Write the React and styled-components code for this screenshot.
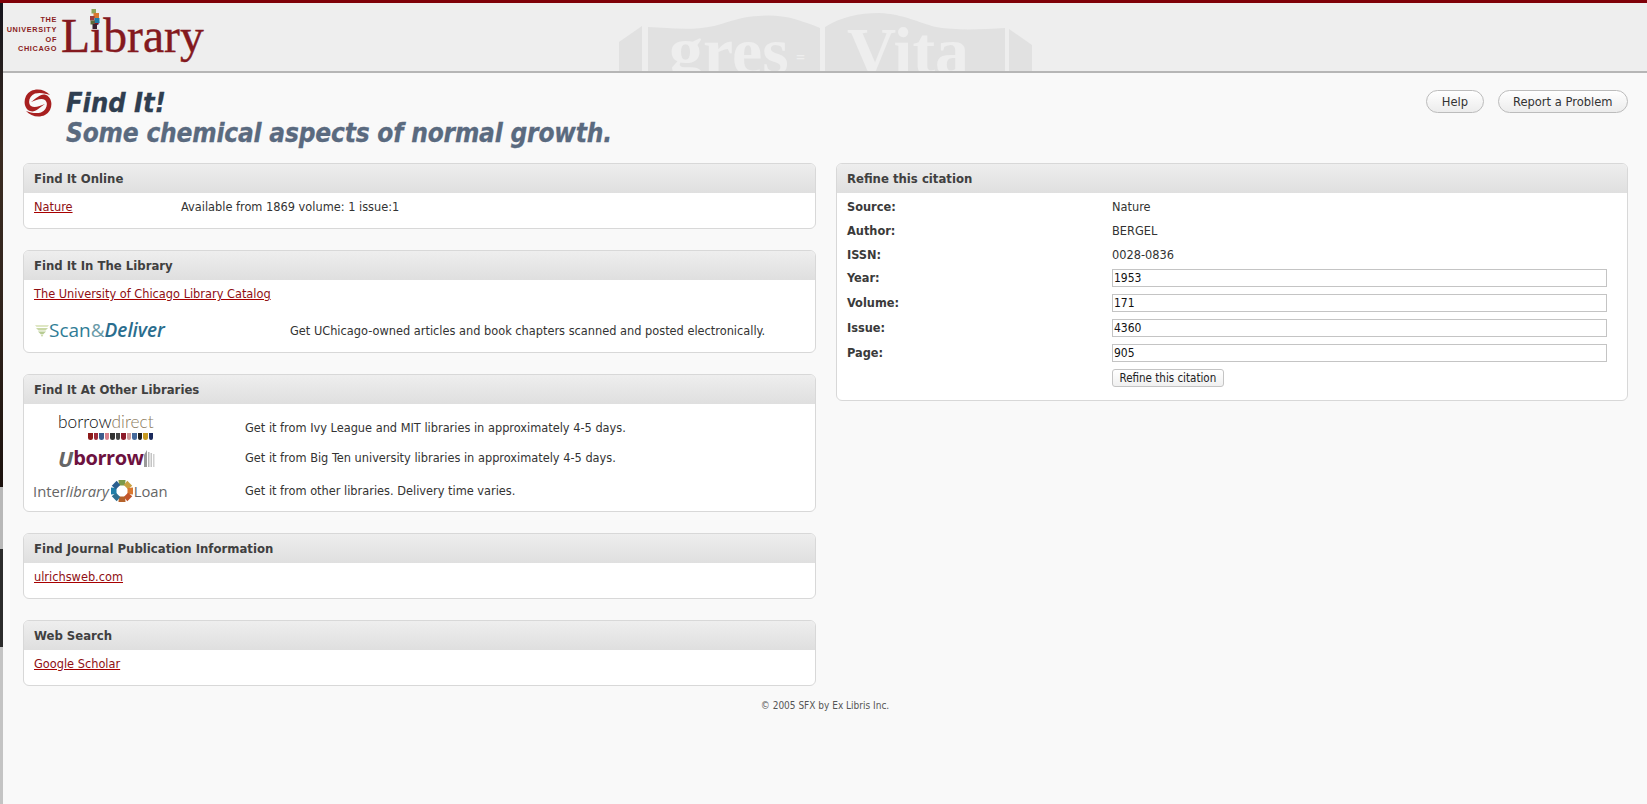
import styled, { createGlobalStyle } from 'styled-components';

const GlobalStyle = createGlobalStyle`
  html, body {
    margin: 0;
    padding: 0;
    background: #f9f9f9;
  }
  body {
    font-family: "DejaVu Sans Condensed", "DejaVu Sans", sans-serif;
    font-size: 12.65px;
    color: #333;
  }
`;

const shieldColors = ['#8c1a1a', '#9e2b3a', '#3a5a8c', '#d8808c', '#333', '#444', '#8c1a2a', '#c99', '#456a9c', '#222', '#c79a20', '#1a2a5c'];
const petalColors = ['#7d9a4a', '#c9a040', '#d9772f', '#c2552a', '#b5622a', '#2f6f8f', '#1f7ea8', '#2a5f8f'];

const citationInfo = [
  { label: 'Source:', value: 'Nature' },
  { label: 'Author:', value: 'BERGEL' },
  { label: 'ISSN:', value: '0028-0836' },
];

const citationFields = [
  { label: 'Year:', value: '1953' },
  { label: 'Volume:', value: '171' },
  { label: 'Issue:', value: '4360' },
  { label: 'Page:', value: '905' },
];

const BookWatermark = () => (
  <MyBookSvg viewBox="0 0 420 68" width="420" height="68">
    <path fill="#e1e1e1" d="M0 39 L23 23 L23 68 L0 68 Z" />
    <path fill="#e1e1e1" d="M29 24 C50 25 72 28 95 23 C110 19 125 13 140 13 C165 11 180 17 201 25 L201 68 L29 68 Z" />
    <path fill="#e1e1e1" d="M206 24 C222 14 240 10 260 10 C285 11 300 20 317 24 C340 28 365 26 386 25 L386 68 L206 68 Z" />
    <path fill="#e1e1e1" d="M390 26 L413 42 L413 68 L390 68 Z" />
    <MyBookText x="50" y="71">gres</MyBookText>
    <MyBookText x="177" y="60" $size={16}>=</MyBookText>
    <MyBookText x="228" y="71">Vita</MyBookText>
  </MyBookSvg>
);

const UniversityLogo = () => (
  <MyLogo>
    <MyLogoCaption>
      <span>THE</span>
      <span>UNIVERSITY</span>
      <span>OF</span>
      <span>CHICAGO</span>
    </MyLogoCaption>
    <MyLogoWord>Library</MyLogoWord>
    <MyLogoBlocks viewBox="0 0 10 20" width="10" height="20">
      <rect x="1.5" y="0" width="4.5" height="4.5" fill="#8fa55a" />
      <rect x="3.5" y="4" width="5.5" height="5" fill="#d9772f" />
      <rect x="0" y="7" width="4.5" height="4.5" fill="#9c3a3a" />
      <rect x="4.5" y="9" width="5" height="5" fill="#1f7ea8" />
      <rect x="0.5" y="11.5" width="4" height="4" fill="#5c6b3a" />
      <rect x="2.5" y="15" width="4.5" height="5" fill="#3a2030" />
    </MyLogoBlocks>
  </MyLogo>
);

const swirlArm = 'M27 7 C21 0 8 -1 3 8 C0 14 2 21 7 23 C12 25 16 20 22 16 C17 17.5 12 20.5 8 18 C4.5 15 6 8 12 5.5 C17 4 23 5.5 27 7 Z';

const SwirlIcon = () => (
  <svg width="30" height="30" viewBox="0 0 30 30" style={{ flexShrink: 0 }}>
    <path fill="#a82020" d={swirlArm} />
    <path fill="#a82020" d={swirlArm} transform="rotate(180 15 15)" />
  </svg>
);

const ScanDeliverLogo = () => (
  <MyScanLogo>
    <svg width="14" height="15" viewBox="0 0 14 15">
      <path fill="#dfe7c4" d="M0 3 H14 L12.5 5 H1.5 Z" />
      <path fill="#c9d8a6" d="M1 6 H13 L10.5 8.5 H3.5 Z" />
      <path fill="#b7cb93" d="M3 9.5 H11 L8.5 12 H5.5 Z" />
      <path fill="#c9d8a6" d="M5.5 12.5 H8.5 L7 15 Z" />
    </svg>
    <MyScanWord>Scan</MyScanWord>
    <MyScanAmp>&amp;</MyScanAmp>
    <MyScanWord $italic>Deliver</MyScanWord>
  </MyScanLogo>
);

const BorrowDirectLogo = () => (
  <MyBorrowDirect>
    <MyBorrowWord>
      borrow<MyDirectWord>direct</MyDirectWord>
    </MyBorrowWord>
    <MyShields>
      {shieldColors.map((color, i) => (
        <MyShield key={i} $color={color} />
      ))}
    </MyShields>
  </MyBorrowDirect>
);

const UborrowLogo = () => (
  <MyUborrow>
    <MyUborrowU>U</MyUborrowU>
    <MyUborrowWord>borrow</MyUborrowWord>
    <svg width="12" height="19" viewBox="0 0 12 19">
      <path fill="#9a9a9a" d="M0 6 L3 1 V18 H0 Z" />
      <rect x="4" y="3" width="1.5" height="15" fill="#b5b5b5" />
      <rect x="6.5" y="4" width="1.5" height="14" fill="#c4c4c4" />
      <rect x="9" y="5" width="1.5" height="13" fill="#d0d0d0" />
    </svg>
  </MyUborrow>
);

const InterlibraryLogo = () => (
  <MyInterlibrary>
    <span>Inter</span>
    <MyLibraryWord>library</MyLibraryWord>
    <svg width="24" height="24" viewBox="0 0 24 24">
      {petalColors.map((color, i) => (
        <path key={color} fill={color} d="M8.5 1 H15.5 L15 6.5 H9 Z" transform={`rotate(${i * 45} 12 12)`} />
      ))}
    </svg>
    <span>Loan</span>
  </MyInterlibrary>
);

export default function App() {
  return (
    <>
      <GlobalStyle />
      <MyTopBar />
      <MyWindow>
        <MyDesktopStrip>
          <MyStripPart $height={484} $bg="linear-gradient(#14141c, #3b2c22 30%, #33261e 60%, #1c120e)" />
          <MyStripPart $height={62} $bg="#b8b8b8" />
          <MyStripPart $height={98} $bg="#2b2b2b" />
          <MyStripPart $height={157} $bg="#c4c4c4" />
        </MyDesktopStrip>
        <MyPage>
          <MyHeader>
            <UniversityLogo />
            <BookWatermark />
          </MyHeader>
          <MyTitleBar>
            <MyTitleGroup>
              <SwirlIcon />
              <MyTitles>
                <MyTitle>Find It!</MyTitle>
                <MySubtitle>Some chemical aspects of normal growth.</MySubtitle>
              </MyTitles>
            </MyTitleGroup>
            <MyTitleButtons>
              <MyPillButton>Help</MyPillButton>
              <MyPillButton>Report a Problem</MyPillButton>
            </MyTitleButtons>
          </MyTitleBar>
          <MyColumns>
            <MyColumn>
              <MyPanel>
                <MyPanelHeader>Find It Online</MyPanelHeader>
                <MyPanelBody>
                  <MyOnlineRow>
                    <MyLink>Nature</MyLink>
                    <span>Available from 1869 volume: 1 issue:1</span>
                  </MyOnlineRow>
                </MyPanelBody>
              </MyPanel>
              <MyPanel>
                <MyPanelHeader>Find It In The Library</MyPanelHeader>
                <MyPanelBody $bottom={11}>
                  <MyLink>The University of Chicago Library Catalog</MyLink>
                  <MyScanRow>
                    <ScanDeliverLogo />
                    <span>Get UChicago-owned articles and book chapters scanned and posted electronically.</span>
                  </MyScanRow>
                </MyPanelBody>
              </MyPanel>
              <MyPanel>
                <MyPanelHeader>Find It At Other Libraries</MyPanelHeader>
                <MyPanelBody $top={12} $bottom={8}>
                  <MyLibraryRow>
                    <BorrowDirectLogo />
                    <span>Get it from Ivy League and MIT libraries in approximately 4-5 days.</span>
                  </MyLibraryRow>
                  <MyLibraryRow $top={6}>
                    <UborrowLogo />
                    <span>Get it from Big Ten university libraries in approximately 4-5 days.</span>
                  </MyLibraryRow>
                  <MyLibraryRow $top={9}>
                    <InterlibraryLogo />
                    <span>Get it from other libraries. Delivery time varies.</span>
                  </MyLibraryRow>
                </MyPanelBody>
              </MyPanel>
              <MyPanel>
                <MyPanelHeader>Find Journal Publication Information</MyPanelHeader>
                <MyPanelBody>
                  <MyLink>ulrichsweb.com</MyLink>
                </MyPanelBody>
              </MyPanel>
              <MyPanel>
                <MyPanelHeader>Web Search</MyPanelHeader>
                <MyPanelBody>
                  <MyLink>Google Scholar</MyLink>
                </MyPanelBody>
              </MyPanel>
            </MyColumn>
            <MyColumn>
              <MyPanel>
                <MyPanelHeader>Refine this citation</MyPanelHeader>
                <MyCitationForm>
                  {citationInfo.map((item) => (
                    <MyCitationRow key={item.label}>
                      <MyCitationLabel>{item.label}</MyCitationLabel>
                      <span>{item.value}</span>
                    </MyCitationRow>
                  ))}
                  {citationFields.map((item) => (
                    <MyCitationRow key={item.label} $field>
                      <MyCitationLabel>{item.label}</MyCitationLabel>
                      <MyCitationInput defaultValue={item.value} />
                    </MyCitationRow>
                  ))}
                  <MyCitationRow $field>
                    <span />
                    <div>
                      <MyRefineButton>Refine this citation</MyRefineButton>
                    </div>
                  </MyCitationRow>
                </MyCitationForm>
              </MyPanel>
            </MyColumn>
          </MyColumns>
          <MyFooter>© 2005 SFX by Ex Libris Inc.</MyFooter>
        </MyPage>
      </MyWindow>
    </>
  );
}

const MyTopBar = styled.div`
  height: 3px;
  background-color: #7f0008;
`;

const MyWindow = styled.div`
  display: flex;
  height: 801px;
  overflow: hidden;
`;

const MyDesktopStrip = styled.div`
  display: flex;
  flex-direction: column;
  flex: 0 0 3px;
`;

const MyStripPart = styled.div`
  height: ${(props) => props.$height}px;
  background: ${(props) => props.$bg};
`;

const MyPage = styled.div`
  flex: 1;
  min-width: 0;
  background-color: #f9f9f9;
`;

const MyHeader = styled.header`
  position: relative;
  height: 68px;
  padding-left: 4px;
  overflow: hidden;
  background-color: #eeeeee;
  border-bottom: 2px solid #b6b6b6;
`;

const MyBookSvg = styled.svg`
  position: absolute;
  left: 616px;
  top: 0;
`;

const MyBookText = styled.text`
  font-family: "Liberation Serif", serif;
  font-weight: bold;
  font-size: ${(props) => props.$size || 68}px;
  fill: #eeeeee;
`;

const MyLogo = styled.div`
  position: relative;
  display: flex;
  align-items: flex-start;
  height: 68px;
  z-index: 1;
`;

const MyLogoCaption = styled.div`
  display: flex;
  flex-direction: column;
  align-items: flex-end;
  width: 50px;
  margin-top: 12px;
  font-family: "Liberation Sans", sans-serif;
  font-size: 7.3px;
  font-weight: bold;
  line-height: 9.8px;
  letter-spacing: 0.65px;
  color: #8a1c22;
`;

const MyLogoWord = styled.div`
  margin-left: 4px;
  margin-top: 5px;
  font-family: "Liberation Serif", serif;
  font-size: 47.6px;
  line-height: 56px;
  color: #84191e;
  -webkit-text-stroke: 0.4px #84191e;
`;

const MyLogoBlocks = styled.svg`
  position: absolute;
  left: 83px;
  top: 6px;
`;

const MyTitleBar = styled.div`
  display: flex;
  justify-content: space-between;
  align-items: flex-start;
  height: 75px;
  padding: 15px 19px 0 20px;
`;

const MyTitleGroup = styled.div`
  display: flex;
  gap: 13px;
`;

const MyTitles = styled.div`
  margin-top: -1px;
  font-weight: bold;
  font-style: italic;
`;

const MyTitle = styled.div`
  font-size: 27px;
  line-height: 31px;
  color: #2f3e50;
  -webkit-text-stroke: 0.3px #2f3e50;
`;

const MySubtitle = styled.div`
  font-size: 26px;
  line-height: 31px;
  letter-spacing: -0.18px;
  color: #5a6a7f;
  -webkit-text-stroke: 0.3px #5a6a7f;
`;

const MyTitleButtons = styled.div`
  display: flex;
  gap: 14px;
  margin-top: 2px;
`;

const MyPillButton = styled.button`
  height: 23px;
  padding: 0 14.5px;
  font-family: inherit;
  font-size: 12.8px;
  color: #333;
  background: linear-gradient(#ffffff, #ececec);
  border: 1px solid #bcbcbc;
  border-radius: 12px;
`;

const MyColumns = styled.div`
  display: grid;
  grid-template-columns: 793px 792px;
  column-gap: 20px;
  align-items: start;
  padding-left: 20px;
`;

const MyColumn = styled.div`
  display: flex;
  flex-direction: column;
  gap: 21px;
`;

const MyPanel = styled.section`
  background-color: #ffffff;
  border: 1px solid #d8d8d8;
  border-radius: 6px;
  overflow: hidden;
`;

const MyPanelHeader = styled.h2`
  height: 29px;
  margin: 0;
  padding: 0 10px;
  font-size: 13px;
  font-weight: bold;
  line-height: 29px;
  color: #404040;
  background: linear-gradient(#eeeeee, #dfdfdf);
`;

const MyPanelBody = styled.div`
  padding: ${(props) => props.$top ?? 6}px 10px ${(props) => props.$bottom ?? 13}px;
  line-height: 16px;
`;

const MyLink = styled.a`
  color: #8f0f14;
  text-decoration: underline;
  text-decoration-color: #a80000;
`;

const MyOnlineRow = styled.div`
  display: grid;
  grid-template-columns: 147px 1fr;
`;

const MyScanRow = styled.div`
  display: grid;
  grid-template-columns: 256px 1fr;
  align-items: center;
  height: 20px;
  margin-top: 19px;
`;

const MyLibraryRow = styled.div`
  display: grid;
  grid-template-columns: 211px 1fr;
  align-items: center;
  height: 24px;
  margin-top: ${(props) => props.$top || 0}px;
`;

const MyScanLogo = styled.div`
  display: flex;
  align-items: center;
  margin-top: -3px;
  padding-left: 1px;
  font-family: "Open Sans", sans-serif;
  font-size: 19px;
  color: #2f7c96;
`;

const MyScanWord = styled.span`
  font-style: ${(props) => (props.$italic ? 'italic' : 'normal')};
  font-weight: ${(props) => (props.$italic ? 600 : 500)};
  color: ${(props) => (props.$italic ? '#2a6d8e' : '#2f7c96')};
`;

const MyScanAmp = styled.span`
  color: #6a9aa8;
`;

const MyBorrowDirect = styled.div`
  position: relative;
  width: 96px;
  height: 24px;
  margin-left: 24px;
`;

const MyBorrowWord = styled.div`
  margin-top: -3px;
  font-family: "Lato", sans-serif;
  font-size: 17.3px;
  font-weight: 300;
  line-height: 18px;
  color: #111;
  white-space: nowrap;
`;

const MyDirectWord = styled.span`
  color: #8b7a5c;
`;

const MyShields = styled.div`
  display: flex;
  gap: 1px;
  justify-content: flex-end;
  margin-top: 2px;
  padding-right: 1px;
`;

const MyShield = styled.span`
  width: 4.5px;
  height: 7px;
  background-color: ${(props) => props.$color};
  border-radius: 0 0 3px 3px;
`;

const MyUborrow = styled.div`
  display: flex;
  align-items: center;
  margin-left: 24px;
  font-family: "Open Sans", sans-serif;
  font-size: 20px;
  font-weight: 700;
  line-height: 24px;
`;

const MyUborrowU = styled.span`
  font-style: italic;
  font-size: 22px;
  color: #666666;
`;

const MyUborrowWord = styled.span`
  letter-spacing: -0.4px;
  color: #6d1240;
`;

const MyInterlibrary = styled.div`
  display: flex;
  align-items: center;
  margin-left: -1px;
  font-family: "Open Sans", sans-serif;
  font-size: 14.8px;
  font-weight: 500;
  line-height: 24px;
  color: #666666;
`;

const MyLibraryWord = styled.span`
  font-style: italic;
  font-weight: 400;
  margin-right: 1px;
`;

const MyCitationForm = styled.div`
  padding: 2px 20px 8px 10px;
`;

const MyCitationRow = styled.div`
  display: grid;
  grid-template-columns: 265px 1fr;
  height: ${(props) => (props.$field ? 25 : 24)}px;
  line-height: 18px;
  align-items: ${(props) => (props.$field ? 'start' : 'center')};
  padding-top: ${(props) => (props.$field ? 2 : 0)}px;
  box-sizing: border-box;
`;

const MyCitationLabel = styled.span`
  font-weight: bold;
  color: #3a3a3a;
`;

const MyCitationInput = styled.input`
  box-sizing: border-box;
  width: 100%;
  height: 18px;
  padding: 0 1px;
  font-family: "DejaVu Sans Condensed", "DejaVu Sans", sans-serif;
  font-size: 12px;
  color: #111;
  background: #ffffff;
  border: 1px solid #c4c4c4;
  border-radius: 0;
  outline: none;
`;

const MyRefineButton = styled.button`
  display: block;
  height: 18px;
  padding: 0 6.5px;
  font-family: inherit;
  font-size: 11.5px;
  line-height: 16px;
  color: #222;
  background: linear-gradient(#ffffff, #f0f0f0);
  border: 1px solid #c4c4c4;
  border-radius: 3px;
`;

const MyFooter = styled.footer`
  margin-top: 12px;
  font-size: 10px;
  line-height: 16px;
  text-align: center;
  color: #555;
`;
